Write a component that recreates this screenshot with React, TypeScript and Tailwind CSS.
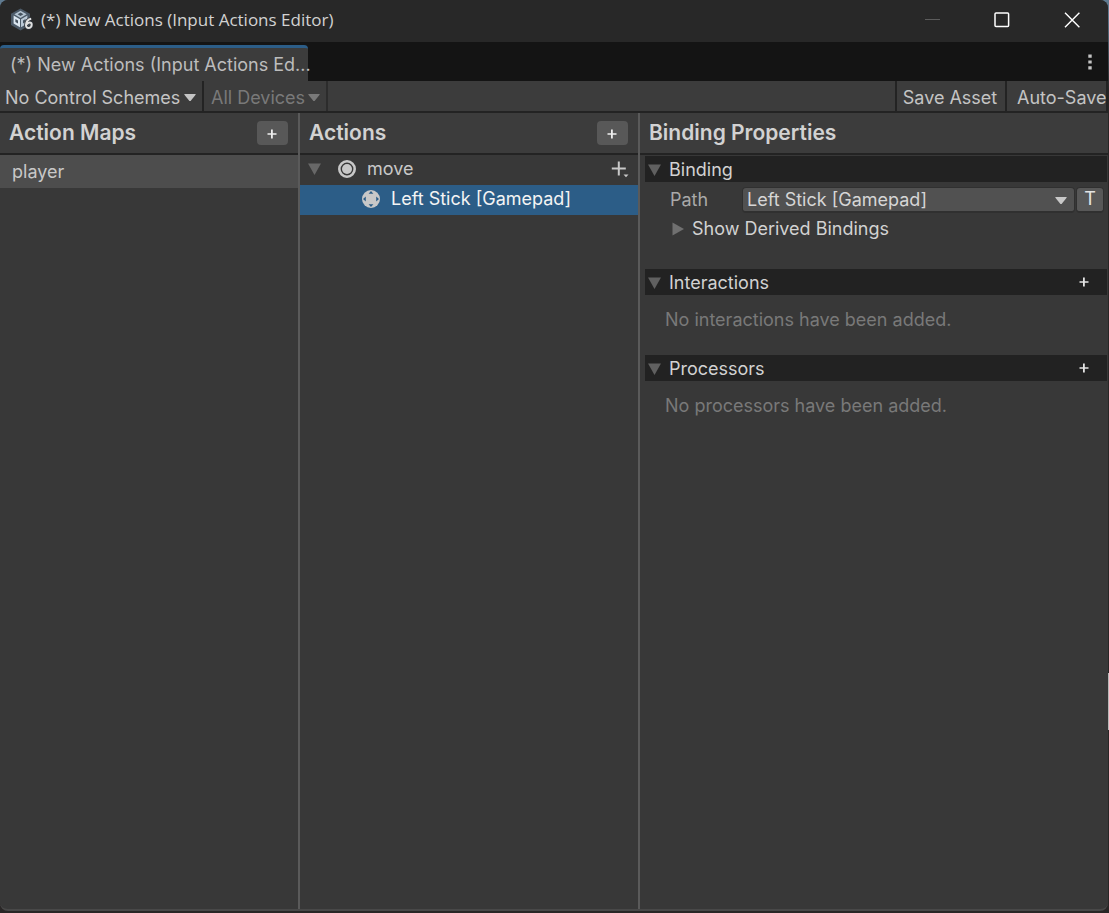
import React, { useState } from 'react';

const DownArrow: React.FC<{ className?: string }> = ({ className = '' }) => (
  <svg className={className} width="13" height="12" viewBox="0 0 13 12" fill="currentColor" aria-hidden="true">
    <path d="M0 0.5h13L6.5 12z" />
  </svg>
);

const SmallArrow: React.FC<{ className?: string }> = ({ className = '' }) => (
  <svg className={className} width="12" height="7" viewBox="0 0 12 7" fill="currentColor" aria-hidden="true">
    <path d="M0.4 0h11.2v0.8L6.6 7H5.4L0.4 0.8z" />
  </svg>
);

const RightArrow: React.FC = () => (
  <svg width="12" height="14" viewBox="0 0 12 14" fill="currentColor" aria-hidden="true">
    <path d="M0.5 0.5v13L12 7z" />
  </svg>
);

const PlusIcon: React.FC = () => (
  <svg width="10" height="10" viewBox="0 0 10 10" fill="currentColor" aria-hidden="true">
    <path d="M4 0.5h1.8v3.7h3.7v1.6H5.8v3.7H4V5.8H0.5V4.2H4z" />
  </svg>
);

const UnityLogo: React.FC = () => (
  <svg width="22" height="24" viewBox="0 0 22 24" aria-hidden="true">
    <path d="M9.5 0.5l9.5 5.2v11.3L9.5 22.5 0 17V5.7z" fill="#4c5a68" />
    <path d="M9.5 2.8l6.2 3.5-6.2 3.6-6.2-3.6z" fill="#b4c4d2" />
    <path d="M2.6 7.6l6.4 3.7v7.9l-6.4-3.7z" fill="#dbe6f0" />
    <path d="M16.4 7.6l-6.4 3.7v7.9l6.4-3.7z" fill="#b9c8d6" />
    <path d="M9.5 4.6l2.9 1.7-2.9 1.7-2.9-1.7zM4.4 11l2.6 1.5v3l-2.6-1.5zM14.6 11L12 12.5v3l2.6-1.5z" fill="#46535f" />
    <path d="M20.2 10.8c-3.2 0.6-5 3.1-5.2 5.9-0.1 2.1 0.9 3.3 2.5 3.3 1.8 0 3.2-1.5 3.2-3.3 0-1.4-0.8-2.3-2.1-2.3-1.2 0-2.4 0.9-3 2.1" fill="none" stroke="#30363d" strokeWidth="3.6" />
    <path d="M20.2 10.8c-3.2 0.6-5 3.1-5.2 5.9-0.1 2.1 0.9 3.3 2.5 3.3 1.8 0 3.2-1.5 3.2-3.3 0-1.4-0.8-2.3-2.1-2.3-1.2 0-2.4 0.9-3 2.1" fill="none" stroke="#e0e0e0" strokeWidth="2" />
  </svg>
);

const ActionIcon: React.FC = () => (
  <svg width="20" height="20" viewBox="0 0 20 20" aria-hidden="true">
    <circle cx="10" cy="10" r="7.7" fill="none" stroke="#c8c8c8" strokeWidth="2.6" />
    <circle cx="10" cy="10" r="5" fill="#c8c8c8" />
  </svg>
);

const StickIcon: React.FC = () => (
  <svg width="20" height="20" viewBox="0 0 20 20" aria-hidden="true">
    <circle cx="10" cy="10" r="9" fill="#c8c8c8" />
    <path d="M10 2l2.4 2.8H7.6zM10 18l2.4-2.8H7.6zM2 10l2.8-2.4v4.8zM18 10l-2.8-2.4v4.8z" fill="#2c5d87" />
  </svg>
);

const TitleBar: React.FC = () => (
  <header className="flex h-[42px] items-center bg-[#282828] pr-px pb-0.5 pl-[11px]">
    <UnityLogo />
    <h1 className="ml-2 flex-1 truncate font-['Open_Sans','Noto_Sans',sans-serif] text-[17px] text-[#d2d2d2]">
      (*) New Actions (Input Actions Editor)
    </h1>
    <button type="button" aria-label="Minimize" disabled className="flex h-full w-[70px] items-center justify-center text-[#5c5c5c]">
      <svg width="16" height="16" viewBox="0 0 16 16"><path d="M1 7.5h15" stroke="currentColor" /></svg>
    </button>
    <button type="button" aria-label="Maximize" className="flex h-full w-[70px] items-center justify-center text-white">
      <svg width="16" height="16" viewBox="0 0 16 16" fill="none"><rect x="1" y="1" width="13.6" height="13.6" rx="1" stroke="currentColor" strokeWidth="1.5" /></svg>
    </button>
    <button type="button" aria-label="Close" className="flex h-full w-[70px] items-center justify-center text-white">
      <svg width="16" height="16" viewBox="0 0 16 16"><path d="M1 0.8l14.4 14.4M15.4 0.8L1 15.2" stroke="currentColor" strokeWidth="1.4" /></svg>
    </button>
  </header>
);

const TabBar: React.FC = () => (
  <div className="flex h-[39px] items-center justify-between bg-[#141414] pt-[3px]">
    <div className="flex h-full w-[308px] items-center rounded-t border-t-[3px] border-[#2c5d87] bg-[#3c3c3c] pl-[10px] whitespace-nowrap text-[#bdbdbd]">
      (*) New Actions (Input Actions Ed...
    </div>
    <button type="button" aria-label="More options" className="flex h-full w-9 items-center justify-center pb-0.5 text-[#c4c4c4]">
      <svg width="4" height="16" viewBox="0 0 4 16" fill="currentColor">
        <path d="M0.3 0.5h3.4v3.2H0.3zM0.3 6.4h3.4v3.2H0.3zM0.3 12.3h3.4v3.2H0.3z" />
      </svg>
    </button>
  </div>
);

const Toolbar: React.FC = () => (
  <div className="flex h-8 border-b-2 border-[#232323] bg-[#3c3c3c] text-[#c4c4c4]">
    <div className="relative w-[204px] border-r-2 border-[#232323]">
      <select aria-label="Control scheme" className="h-full w-full appearance-none pt-[3px] pl-[5px]">
        <option>No Control Schemes</option>
      </select>
      <SmallArrow className="pointer-events-none absolute top-[13px] right-1.5" />
    </div>
    <div className="relative w-[124px] border-r-2 border-[#2c2c2c] text-[#797979]">
      <select aria-label="Device" disabled className="h-full w-full appearance-none pt-[3px] pl-[7px]">
        <option>All Devices</option>
      </select>
      <SmallArrow className="pointer-events-none absolute top-[13px] right-1.5" />
    </div>
    <div className="flex-1" />
    <button type="button" className="w-28 border-x-2 border-[#232323] pt-[3px] pr-0.5 whitespace-nowrap">Save Asset</button>
    <button type="button" className="w-[101px] overflow-hidden border-r-2 border-[#232323] pt-[3px] pl-[10px] text-left whitespace-nowrap">Auto-Save</button>
  </div>
);

const PanelHeader: React.FC<{ title: string; onAdd?: string }> = ({ title, onAdd }) => (
  <div className="flex h-[42px] items-center justify-between border-b-2 border-[#232323] bg-[#3c3c3c] pr-[10px] pl-[9px]">
    <h2 className="text-[21px] font-semibold text-[#d2d2d2]">{title}</h2>
    {onAdd && (
      <button type="button" aria-label={onAdd} className="flex h-6 w-[31px] items-center justify-center rounded bg-[#585858] pt-0.5 pr-px text-[#eeeeee]">
        <PlusIcon />
      </button>
    )}
  </div>
);

const Foldout: React.FC<{ title: string; onAdd?: string; children: React.ReactNode }> = ({ title, onAdd, children }) => {
  const [open, setOpen] = useState(true);

  return (
    <section>
      <div className="flex h-[26px] items-center bg-[#222222] pr-[18px]">
        <button type="button" aria-expanded={open} onClick={() => setOpen(!open)} className="flex flex-1 items-center gap-2 pt-0.5 pl-[3px] text-[#d2d2d2]">
          <DownArrow className="text-[#606060]" />
          {title}
        </button>
        {onAdd && (
          <button type="button" aria-label={onAdd} className="text-[#e4e4e4]">
            <PlusIcon />
          </button>
        )}
      </div>
      {open && children}
    </section>
  );
};

const ActionMaps: React.FC = () => (
  <section className="w-[300px] shrink-0 border-r-2 border-[#5a5a5a]">
    <PanelHeader title="Action Maps" onAdd="Add action map" />
    <ul>
      <li className="flex h-[33px] items-center bg-[#4d4d4d] pl-3">player</li>
    </ul>
  </section>
);

const Actions: React.FC = () => (
  <section className="w-[340px] shrink-0 border-r-2 border-[#5a5a5a]">
    <PanelHeader title="Actions" onAdd="Add action" />
    <ul>
      <li className="flex h-[30px] items-center pr-[9px] pb-0.5 pl-2">
        <DownArrow className="text-[#686868]" />
        <span className="ml-4"><ActionIcon /></span>
        <span className="ml-[10px] flex-1">move</span>
        <button type="button" aria-label="Add binding">
          <svg width="18" height="18" viewBox="0 0 18 18" fill="currentColor">
            <path d="M6.8 1.5h2v6h6v2h-6v6h-2v-6h-6v-2h6zM12.5 14.5h5L15 17.2z" />
          </svg>
        </button>
      </li>
      <li className="flex h-[30px] items-center gap-[10px] bg-[#2c5d87] pb-0.5 pl-[61px] text-[#f4f4f4]">
        <StickIcon />
        Left Stick [Gamepad]
      </li>
    </ul>
  </section>
);

const BindingProperties: React.FC = () => (
  <section className="min-w-0 flex-1">
    <PanelHeader title="Binding Properties" />
    <div className="pt-px pr-px pl-[5px]">
      <Foldout title="Binding">
        <div className="flex h-[35px] items-center pr-[3px] pl-[25px]">
          <label htmlFor="path" className="w-[72px] text-[#a9a9a9]">Path</label>
          <div className="relative flex-1">
            <select id="path" className="h-[26px] w-full appearance-none rounded border border-b-2 border-[#303030] bg-[#515151] pl-1 text-[#d6d6d6]">
              <option>Left Stick [Gamepad]</option>
            </select>
            <SmallArrow className="pointer-events-none absolute top-[10px] right-2" />
          </div>
          <button type="button" aria-pressed="false" className="ml-px flex h-[26px] w-7 items-center justify-center rounded border border-b-2 border-[#303030] bg-[#585858] text-[#e4e4e4]">
            T
          </button>
        </div>
        <button type="button" aria-expanded="false" className="flex h-6 items-center gap-2 pl-[27px] text-[#d2d2d2]">
          <span className="text-[#707070]"><RightArrow /></span>
          Show Derived Bindings
        </button>
        <div className="h-7" />
      </Foldout>
      <Foldout title="Interactions" onAdd="Add interaction">
        <p className="h-[60px] pt-[13px] pl-5 text-[#797979]">No interactions have been added.</p>
      </Foldout>
      <Foldout title="Processors" onAdd="Add processor">
        <p className="h-[60px] pt-[13px] pl-5 text-[#797979]">No processors have been added.</p>
      </Foldout>
    </div>
  </section>
);

const App: React.FC = () => (
  <div className="relative flex h-screen flex-col bg-[linear-gradient(#5f7a90_0,#5f7a90_14px,#292626_90px)] pr-px pb-0.5 font-['Inter',sans-serif] text-[18px] leading-6 text-[#c8c8c8]">
    <div className="flex flex-1 flex-col overflow-hidden rounded-lg border-b-2 border-[#484848] bg-[#383838]">
      <TitleBar />
      <TabBar />
      <Toolbar />
      <main className="flex flex-1">
        <ActionMaps />
        <Actions />
        <BindingProperties />
      </main>
    </div>
    <div className="absolute top-[673px] right-0 h-[57px] w-px bg-[#b8b8b8]" />
  </div>
);

export default App;
